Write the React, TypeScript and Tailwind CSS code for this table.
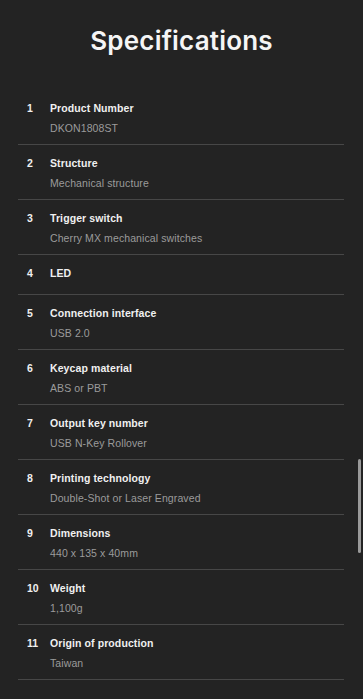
const specs: { label: string; value?: string }[] = [
  { label: "Product Number", value: "DKON1808ST" },
  { label: "Structure", value: "Mechanical structure" },
  { label: "Trigger switch", value: "Cherry MX mechanical switches" },
  { label: "LED" },
  { label: "Connection interface", value: "USB 2.0" },
  { label: "Keycap material", value: "ABS or PBT" },
  { label: "Output key number", value: "USB N-Key Rollover" },
  { label: "Printing technology", value: "Double-Shot or Laser Engraved" },
  { label: "Dimensions", value: "440 x 135 x 40mm" },
  { label: "Weight", value: "1,100g" },
  { label: "Origin of production", value: "Taiwan" },
];

export default function App() {
  return (
    <div
      className="relative h-[699px] w-[363px] overflow-hidden bg-[#232323] text-white"
      style={{ fontFamily: "'Liberation Sans', Arial, sans-serif" }}
    >
      <h1
        className="pt-[22px] text-center text-[26px] font-semibold leading-[38px] tracking-[0.2px] text-[#f5f5f5]"
        style={{ fontFamily: "Inter, 'Noto Sans', sans-serif" }}
      >
        Specifications
      </h1>

      <ul className="mx-[18px] mt-[30px] w-[326px]">
        {specs.map((s, i) => (
          <li
            key={s.label}
            className={`flex border-b border-[#474747] pt-[10px] ${
              s.value ? "h-[55px]" : "h-[40px]"
            }`}
          >
            <span className="w-[32px] pl-[9px] text-[10.5px] font-bold leading-[16px] text-[#f0f0f0]">
              {i + 1}
            </span>
            <div className="flex flex-col">
              <span className="text-[10.5px] font-bold leading-[16px] tracking-[0.1px] text-[#f0f0f0]">
                {s.label}
              </span>
              {s.value && (
                <span className="mt-[4px] text-[10.5px] leading-[16px] tracking-[0.1px] text-[#9b9b9b]">
                  {s.value}
                </span>
              )}
            </div>
          </li>
        ))}
      </ul>

      {/* scrollbar thumb */}
      <div className="absolute left-[358px] top-[459px] h-[94px] w-[3px] rounded-full bg-[#9a9a9a]" />
    </div>
  );
}
